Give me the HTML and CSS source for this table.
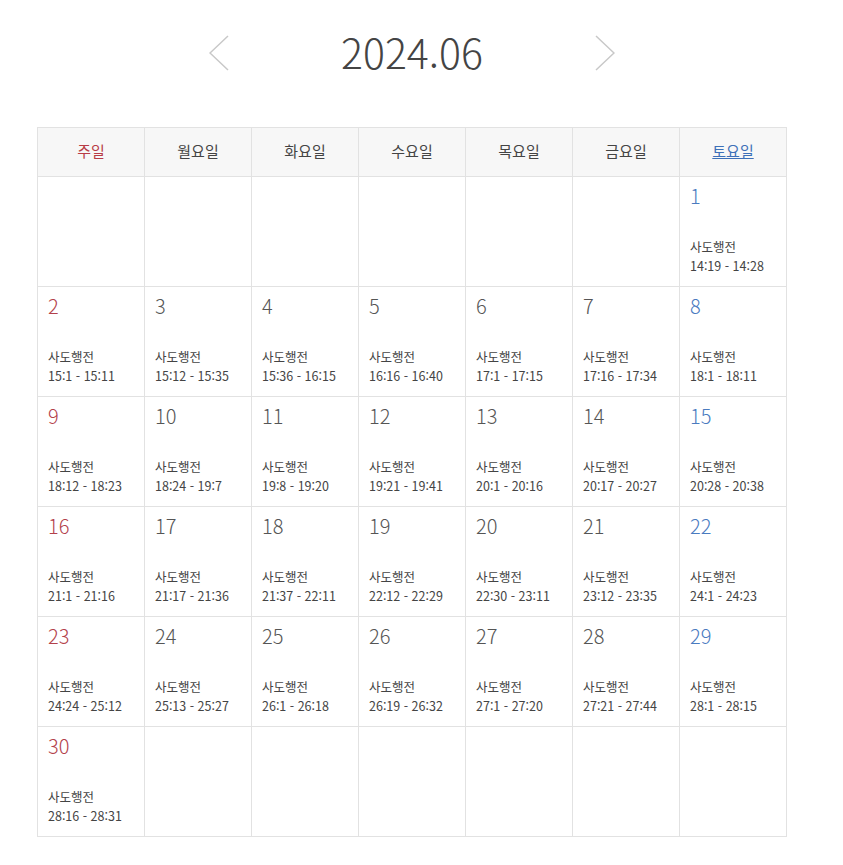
FILE: index.html
```html
<!DOCTYPE html>
<html lang="ko">
<head>
<meta charset="utf-8">
<title>2024.06</title>
<link rel="stylesheet" href="styles.css">
</head>
<body>
<div class="wrap">
  <div class="month-nav">
    <a class="arrow" href="#" aria-label="이전 달">
      <svg width="20" height="36" viewBox="0 0 20 36"><polyline points="19,1 1,18 19,35" fill="none" stroke="#c8c8c8" stroke-width="1.5"/></svg>
    </a>
    <h1 class="month">2024.06</h1>
    <a class="arrow" href="#" aria-label="다음 달">
      <svg width="20" height="36" viewBox="0 0 20 36"><polyline points="1,1 19,18 1,35" fill="none" stroke="#c8c8c8" stroke-width="1.5"/></svg>
    </a>
  </div>

  <div class="cal">
    <div class="hd sun">주일</div>
    <div class="hd">월요일</div>
    <div class="hd">화요일</div>
    <div class="hd">수요일</div>
    <div class="hd">목요일</div>
    <div class="hd">금요일</div>
    <div class="hd sat"><a href="#">토요일</a></div>

    <div class="day"></div><div class="day"></div><div class="day"></div><div class="day"></div><div class="day"></div><div class="day"></div>
    <div class="day sat"><span class="num">1</span><p class="ev">사도행전<br>14:19 - 14:28</p></div>

    <div class="day sun"><span class="num">2</span><p class="ev">사도행전<br>15:1 - 15:11</p></div>
    <div class="day"><span class="num">3</span><p class="ev">사도행전<br>15:12 - 15:35</p></div>
    <div class="day"><span class="num">4</span><p class="ev">사도행전<br>15:36 - 16:15</p></div>
    <div class="day"><span class="num">5</span><p class="ev">사도행전<br>16:16 - 16:40</p></div>
    <div class="day"><span class="num">6</span><p class="ev">사도행전<br>17:1 - 17:15</p></div>
    <div class="day"><span class="num">7</span><p class="ev">사도행전<br>17:16 - 17:34</p></div>
    <div class="day sat"><span class="num">8</span><p class="ev">사도행전<br>18:1 - 18:11</p></div>

    <div class="day sun"><span class="num">9</span><p class="ev">사도행전<br>18:12 - 18:23</p></div>
    <div class="day"><span class="num">10</span><p class="ev">사도행전<br>18:24 - 19:7</p></div>
    <div class="day"><span class="num">11</span><p class="ev">사도행전<br>19:8 - 19:20</p></div>
    <div class="day"><span class="num">12</span><p class="ev">사도행전<br>19:21 - 19:41</p></div>
    <div class="day"><span class="num">13</span><p class="ev">사도행전<br>20:1 - 20:16</p></div>
    <div class="day"><span class="num">14</span><p class="ev">사도행전<br>20:17 - 20:27</p></div>
    <div class="day sat"><span class="num">15</span><p class="ev">사도행전<br>20:28 - 20:38</p></div>

    <div class="day sun"><span class="num">16</span><p class="ev">사도행전<br>21:1 - 21:16</p></div>
    <div class="day"><span class="num">17</span><p class="ev">사도행전<br>21:17 - 21:36</p></div>
    <div class="day"><span class="num">18</span><p class="ev">사도행전<br>21:37 - 22:11</p></div>
    <div class="day"><span class="num">19</span><p class="ev">사도행전<br>22:12 - 22:29</p></div>
    <div class="day"><span class="num">20</span><p class="ev">사도행전<br>22:30 - 23:11</p></div>
    <div class="day"><span class="num">21</span><p class="ev">사도행전<br>23:12 - 23:35</p></div>
    <div class="day sat"><span class="num">22</span><p class="ev">사도행전<br>24:1 - 24:23</p></div>

    <div class="day sun"><span class="num">23</span><p class="ev">사도행전<br>24:24 - 25:12</p></div>
    <div class="day"><span class="num">24</span><p class="ev">사도행전<br>25:13 - 25:27</p></div>
    <div class="day"><span class="num">25</span><p class="ev">사도행전<br>26:1 - 26:18</p></div>
    <div class="day"><span class="num">26</span><p class="ev">사도행전<br>26:19 - 26:32</p></div>
    <div class="day"><span class="num">27</span><p class="ev">사도행전<br>27:1 - 27:20</p></div>
    <div class="day"><span class="num">28</span><p class="ev">사도행전<br>27:21 - 27:44</p></div>
    <div class="day sat"><span class="num">29</span><p class="ev">사도행전<br>28:1 - 28:15</p></div>

    <div class="day sun"><span class="num">30</span><p class="ev">사도행전<br>28:16 - 28:31</p></div>
    <div class="day"></div><div class="day"></div><div class="day"></div><div class="day"></div><div class="day"></div><div class="day"></div>
  </div>
</div>
</body>
</html>
```
FILE: styles.css
```css
html, body {
  margin: 0;
  padding: 0;
  background: #fff;
}
body {
  font-family: "Noto Sans CJK KR", "Noto Sans", sans-serif;
  color: #444;
}
.wrap {
  width: 750px;
  margin-left: 37px;
  padding-top: 26px;
}
.month-nav {
  display: flex;
  justify-content: center;
  align-items: center;
  gap: 112px;
  height: 50px;
  margin-bottom: 51px;
}
.arrow {
  display: block;
  width: 20px;
  height: 36px;
  margin-top: 4px;
}
.arrow svg { display: block; }
.month {
  margin: 0;
  font-size: 41px;
  font-weight: 300;
  color: #444;
  line-height: 50px;
}
.cal {
  display: grid;
  grid-template-columns: repeat(7, 107px);
  grid-template-rows: 49px;
  grid-auto-rows: 110px;
  width: 749px;
  border-top: 1px solid #e2e2e2;
  border-left: 1px solid #e2e2e2;
}
.hd, .day {
  border-right: 1px solid #e2e2e2;
  border-bottom: 1px solid #e2e2e2;
}
.hd {
  background: #f7f7f7;
  display: flex;
  align-items: center;
  justify-content: center;
  padding-bottom: 4px;
  font-size: 15px;
  color: #444;
}
.hd.sun { color: #b83c46; }
.hd.sat a { color: #3d70b8; text-decoration: underline; }
.day {
  padding: 6px 10px 0;
  display: flex;
  flex-direction: column;
  align-items: flex-start;
}
.num {
  font-size: 20px;
  font-weight: 300;
  line-height: 26px;
  color: #555;
}
.day.sun .num { color: #b3414b; }
.day.sat .num { color: #4a7bbf; }
.ev {
  margin: 29px 0 0;
  font-size: 12.5px;
  line-height: 18.5px;
  color: #444;
}
```
